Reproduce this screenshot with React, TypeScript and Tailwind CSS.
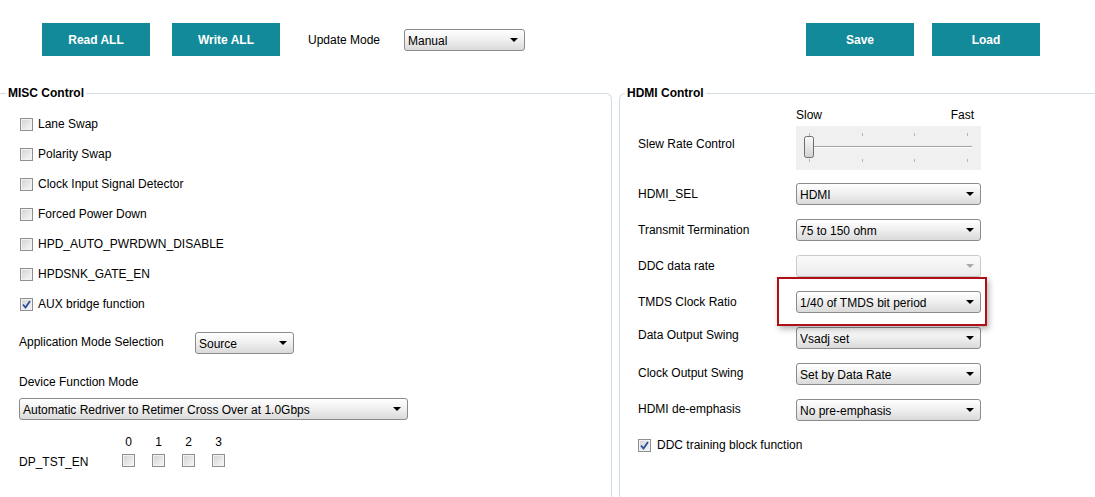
import React from 'react';

const Btn = ({ label }: { label: string }) => (
  <button className="w-[108px] h-[33px] bg-[#138a99] text-white font-bold text-[12px] leading-[14px]">
    {label}
  </button>
);

const Check = ({ checked = false }: { checked?: boolean }) => (
  <span className="relative w-[13px] h-[13px] shrink-0 border border-[#8f8f8f] bg-gradient-to-br from-[#d2d2d2] to-[#f8f8f8] shadow-[inset_0_0_0_1px_#f2f2f2] flex items-center justify-center">
    {checked && (
      <svg width="9" height="9" viewBox="0 0 9 9">
        <path d="M1 4.5 L3.5 7.5 L8 1" fill="none" stroke="#2a4d9e" strokeWidth="1.8" />
      </svg>
    )}
  </span>
);

const Select = ({
  value = '',
  w,
  disabled = false,
}: {
  value?: string;
  w: string;
  disabled?: boolean;
}) => (
  <div
    className={`${w} h-[22px] shrink-0 rounded-[3px] border flex items-center pl-[3px] pr-[6px] text-[12px] leading-[14px] ${
      disabled
        ? 'border-[#cbcbcb] bg-gradient-to-b from-[#fafafa] to-[#ededed]'
        : 'border-[#8b8b8b] bg-gradient-to-b from-white via-[#efefef] to-[#dadada] text-black'
    }`}
  >
    <span className="flex-1 truncate pt-[2px]">{value}</span>
    <svg width="8" height="4" viewBox="0 0 8 4">
      <polygon points="0,0 8,0 4,4" fill={disabled ? '#ababab' : '#000'} />
    </svg>
  </div>
);

const Slider = () => (
  <div className="w-[185px] h-[44px] bg-[#f0f0f0] mt-[4px]">
    <svg width="185" height="44" viewBox="0 0 185 44">
      {[13, 66, 118, 171].map((x) => (
        <g key={x} stroke="#b4b4b4">
          <line x1={x + 0.5} y1="7" x2={x + 0.5} y2="10" />
          <line x1={x + 0.5} y1="33" x2={x + 0.5} y2="36" />
        </g>
      ))}
      <line x1="12" y1="20.5" x2="176" y2="20.5" stroke="#a2a2a2" />
      <line x1="12" y1="21.5" x2="176" y2="21.5" stroke="#ffffff" />
      <defs>
        <linearGradient id="thumb" x1="0" y1="0" x2="0" y2="1">
          <stop offset="0" stopColor="#fbfbfb" />
          <stop offset="1" stopColor="#d2d2d2" />
        </linearGradient>
      </defs>
      <rect x="8.5" y="10.5" width="9" height="21" rx="2" fill="url(#thumb)" stroke="#6e6e6e" />
    </svg>
  </div>
);

const miscChecks: [string, boolean][] = [
  ['Lane Swap', false],
  ['Polarity Swap', false],
  ['Clock Input Signal Detector', false],
  ['Forced Power Down', false],
  ['HPD_AUTO_PWRDWN_DISABLE', false],
  ['HPDSNK_GATE_EN', false],
  ['AUX bridge function', true],
];

const hdmiRows: { label: string; value: string; disabled?: boolean; lift: string }[] = [
  { label: 'HDMI_SEL', value: 'HDMI', lift: '' },
  { label: 'Transmit Termination', value: '75 to 150 ohm', lift: '' },
  { label: 'DDC data rate', value: '', disabled: true, lift: '' },
  { label: 'TMDS Clock Ratio', value: '1/40 of TMDS bit period', lift: '' },
  { label: 'Data Output Swing', value: 'Vsadj set', lift: 'mb-[6px]' },
  { label: 'Clock Output Swing', value: 'Set by Data Rate', lift: 'mb-[3px]' },
  { label: 'HDMI de-emphasis', value: 'No pre-emphasis', lift: 'mb-[3px]' },
];

export default function App() {
  return (
    <div className="relative w-[1095px] h-[497px] overflow-hidden bg-white text-[12px] leading-[14px] text-black font-['Liberation_Sans',Arial,sans-serif]">
      {/* Toolbar */}
      <div className="h-[86px] pt-[23px] pl-[42px] pr-[55px]">
        <div className="flex items-center h-[33px]">
          <Btn label="Read ALL" />
          <div className="ml-[22px]">
            <Btn label="Write ALL" />
          </div>
          <span className="ml-[28px] w-[96px]">Update Mode</span>
          <Select value="Manual" w="w-[121px]" />
          <div className="ml-auto flex gap-[18px]">
            <Btn label="Save" />
            <Btn label="Load" />
          </div>
        </div>
      </div>

      <div className="flex">
        {/* MISC Control */}
        <fieldset className="w-[612px] h-[411px] border-t border-r border-[#d3dde4] rounded-tr-[6px]">
          <legend className="ml-[6px] px-[2px] font-bold leading-[14px]">MISC Control</legend>
          <div className="pt-[9px]">
            {miscChecks.map(([label, checked]) => (
              <div key={label} className="h-[30px] flex items-center pl-[20px] gap-[5px]">
                <Check checked={checked} />
                <span>{label}</span>
              </div>
            ))}
          </div>

          <div className="mt-[13px] flex items-center pl-[19px]">
            <span className="w-[176px] -mt-[2px]">Application Mode Selection</span>
            <Select value="Source" w="w-[99px]" />
          </div>

          <div className="mt-[21px] pl-[19px]">Device Function Mode</div>
          <div className="mt-[9px] pl-[19px]">
            <Select value="Automatic Redriver to Retimer Cross Over at 1.0Gbps" w="w-[389px]" />
          </div>

          <div className="mt-[15px] flex pl-[19px]">
            <span className="w-[103px] pt-[20px]">DP_TST_EN</span>
            <div className="flex gap-[17px]">
              {['0', '1', '2', '3'].map((n) => (
                <div key={n} className="w-[13px] flex flex-col items-center">
                  <span>{n}</span>
                  <div className="mt-[5px]">
                    <Check />
                  </div>
                </div>
              ))}
            </div>
          </div>
        </fieldset>

        {/* HDMI Control */}
        <fieldset className="ml-[7px] flex-1 h-[411px] border-t border-l border-[#d3dde4] rounded-tl-[6px]">
          <legend className="ml-[5px] px-[2px] font-bold leading-[14px]">HDMI Control</legend>
          <div className="pl-[18px] pt-[8px]">
            <div className="flex">
              <div className="w-[158px]" />
              <div className="w-[185px] flex justify-between pr-[7px]">
                <span>Slow</span>
                <span>Fast</span>
              </div>
            </div>
            <div className="flex">
              <span className="w-[158px] pt-[15px]">Slew Rate Control</span>
              <Slider />
            </div>

            <div className="mt-[13px] flex flex-col gap-[14px]">
              {hdmiRows.map((r) => (
                <div key={r.label} className="flex items-center">
                  <span className={`w-[158px] ${r.lift}`}>{r.label}</span>
                  <Select value={r.value} w="w-[185px]" disabled={r.disabled} />
                </div>
              ))}
            </div>

            <div className="mt-[17px] flex items-center gap-[6px]">
              <Check checked />
              <span>DDC training block function</span>
            </div>
          </div>
        </fieldset>
      </div>

      {/* annotation highlight */}
      <div className="absolute left-[777px] top-[277px] w-[210px] h-[49px] border-2 border-[#b10f18] shadow-[2px_3px_6px_rgba(0,0,0,0.3)]" />
    </div>
  );
}
